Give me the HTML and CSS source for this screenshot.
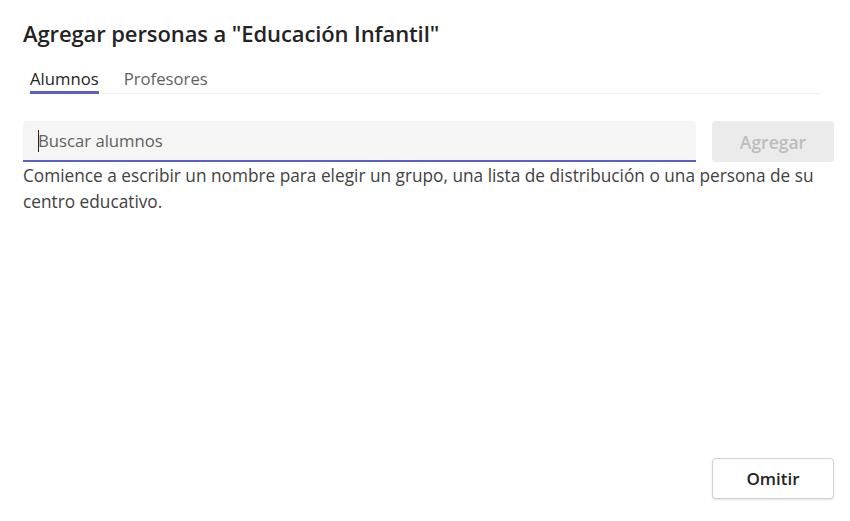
FILE: index.html
```html
<!DOCTYPE html>
<html lang="es">
<head>
<meta charset="utf-8">
<title>Agregar personas</title>
<link rel="stylesheet" href="styles.css">
</head>
<body>
<div class="dialog">
  <h1 class="title">Agregar personas a "Educación Infantil"</h1>
  <div class="tabs">
    <div class="tab active">Alumnos</div>
    <div class="tab">Profesores</div>
  </div>
  <div class="search-row">
    <div class="input"><span class="caret"></span><span class="placeholder">Buscar alumnos</span></div>
    <button class="btn btn-disabled">Agregar</button>
  </div>
  <p class="help">Comience a escribir un nombre para elegir un grupo, una lista de distribución o una persona de su centro educativo.</p>
  <div class="spacer"></div>
  <div class="footer">
    <button class="btn btn-secondary">Omitir</button>
  </div>
</div>
</body>
</html>
```
FILE: styles.css
```css
* { box-sizing: border-box; }
html, body { margin: 0; padding: 0; background: #fff; }
body {
  font-family: "Open Sans", "Noto Sans", sans-serif;
  color: #242424;
  width: 850px;
  height: 521px;
}
.dialog {
  display: flex;
  flex-direction: column;
  height: 521px;
  padding: 18px 16px 22px 23px;
}
.title {
  margin: 0;
  font-size: 22px;
  font-weight: 600;
  line-height: 30px;
  color: #242424;
  letter-spacing: -0.1px;
}
.tabs {
  display: flex;
  gap: 25px;
  margin: 19px 14px 0 0;
  padding-left: 7px;
  border-bottom: 1px solid #f0f0f0;
}
.tab {
  font-size: 16.7px;
  line-height: 24px;
  padding-bottom: 0;
  color: #616161;
  border-bottom: 3px solid transparent;
  margin-bottom: -1px;
}
.tab.active {
  color: #242424;
  border-bottom-color: #5b5fc7;
}
.search-row {
  display: flex;
  gap: 16px;
  margin-top: 27px;
}
.input {
  flex: 1;
  height: 41px;
  background: #f5f5f5;
  border-radius: 4px 4px 0 0;
  border-bottom: 2px solid #5b5fc7;
  display: flex;
  align-items: center;
  padding-left: 15px;
  font-size: 16.7px;
  color: #616161;
}
.caret {
  width: 1px;
  height: 22px;
  background: #242424;
  margin-right: -1px;
}
.btn {
  width: 122px;
  height: 41px;
  border-radius: 4px;
  font-family: inherit;
  font-size: 17px;
  font-weight: 600;
  padding: 0;
}
.btn-disabled {
  background: #ebebeb;
  border: none;
  color: #bdbdbd;
  font-size: 17.5px;
}
.help {
  margin: 1px 0 0;
  font-size: 17.25px;
  line-height: 26px;
  color: #424242;
}
.spacer { flex: 1; }
.footer {
  display: flex;
  justify-content: flex-end;
}
.btn-secondary {
  background: #fff;
  border: 1px solid #d1d1d1;
  color: #242424;
  box-shadow: 0 1px 2px rgba(0,0,0,0.12);
}
```
